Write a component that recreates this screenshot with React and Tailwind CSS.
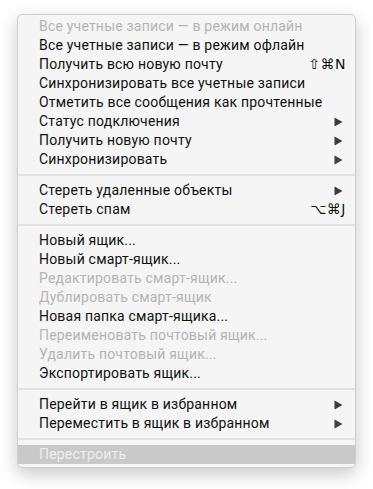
import React from 'react';

const items = [
  { label: 'Все учетные записи — в режим онлайн', disabled: true },
  { label: 'Все учетные записи — в режим офлайн' },
  { label: 'Получить всю новую почту', shortcut: '⇧⌘N' },
  { label: 'Синхронизировать все учетные записи' },
  { label: 'Отметить все сообщения как прочтенные' },
  { label: 'Статус подключения', submenu: true },
  { label: 'Получить новую почту', submenu: true },
  { label: 'Синхронизировать', submenu: true },
  { sep: true },
  { label: 'Стереть удаленные объекты', submenu: true },
  { label: 'Стереть спам', shortcut: '⌥⌘J' },
  { sep: true },
  { label: 'Новый ящик...' },
  { label: 'Новый смарт-ящик...' },
  { label: 'Редактировать смарт-ящик...', disabled: true },
  { label: 'Дублировать смарт-ящик', disabled: true },
  { label: 'Новая папка смарт-ящика...' },
  { label: 'Переименовать почтовый ящик...', disabled: true },
  { label: 'Удалить почтовый ящик...', disabled: true },
  { label: 'Экспортировать ящик...' },
  { sep: true },
  { label: 'Перейти в ящик в избранном', submenu: true },
  { label: 'Переместить в ящик в избранном', submenu: true },
  { sep: true },
  { label: 'Перестроить', disabled: true, active: true },
];

const Arrow = () => (
  <svg width="9" height="10" viewBox="0 0 9 10" className="mr-[3px]">
    <path d="M0.5 0.5 L8.5 5 L0.5 9.5 Z" fill="#3c3c3c" />
  </svg>
);

const MenuRow = ({ item }) => {
  if (item.sep) {
    return (
      <div className="h-[12px] flex items-center">
        <div className="h-[2px] w-full bg-[#e2e2e2]" />
      </div>
    );
  }
  const color = item.active
    ? 'text-[#eeeeee] bg-[#c9c9c9]'
    : item.disabled
    ? 'text-[#b4b4b4]'
    : 'text-[#111111]';
  return (
    <div className={`h-[19px] flex items-center justify-between pl-[21px] pr-[9px] ${color}`}>
      <span className="whitespace-nowrap">{item.label}</span>
      {item.shortcut && (
        <span className="font-['DejaVu_Sans',sans-serif] text-[14px] tracking-[0.5px]">{item.shortcut}</span>
      )}
      {item.submenu && <Arrow />}
    </div>
  );
};

const App = () => {
  return (
    <div className="w-[373px] h-[489px] bg-white pt-[14px] pl-[17px] font-['Roboto',sans-serif] text-[14px] leading-[19px] tracking-[0.2px]">
      <div className="w-[339px] bg-[#f5f5f5] border border-[#cfcfcf] rounded-[5px] pt-[2px] pb-[3px] overflow-hidden shadow-[0_6px_18px_rgba(0,0,0,0.22)]">
        {items.map((item, i) => (
          <MenuRow key={i} item={item} />
        ))}
      </div>
    </div>
  );
};

export default App;
